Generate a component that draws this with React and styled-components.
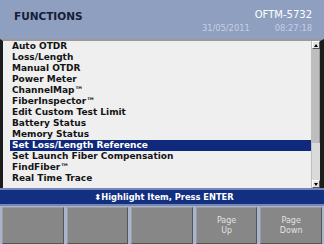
import React from "react";
import styled, { createGlobalStyle } from "styled-components";

const Global = createGlobalStyle`
  html, body { margin: 0; padding: 0; background: #000; }
  body { font-family: "DejaVu Sans", Verdana, sans-serif; }
`;

const Screen = styled.div`
  width: 324px;
  height: 244px;
  display: flex;
  flex-direction: column;
  background: #101010;
  overflow: hidden;
`;

const Header = styled.div`
  height: 39px;
  flex: none;
  background: #8e9fbf;
  display: flex;
  justify-content: space-between;
  padding: 0 12px 0 14px;
  box-sizing: border-box;
`;

const Title = styled.div`
  font-weight: bold;
  font-size: 10.5px;
  color: #14203a;
  padding-top: 10px;
`;

const Right = styled.div`
  display: flex;
  flex-direction: column;
  align-items: flex-end;
  padding-top: 9px;
`;

const Model = styled.div`
  color: #fff;
  font-size: 10px;
`;

const DateRow = styled.div`
  display: flex;
  gap: 25px;
  margin-top: 3px;
  font-size: 8.3px;
  color: #c7d0e3;
`;

const ListPanel = styled.div`
  flex: 1;
  display: flex;
  background: #efefef;
  border-top: 2px solid #9a9a9a;
  border-left: 3px solid #1c1c1c;
  border-right: 4px solid #1c1c1c;
  min-height: 0;
`;

const List = styled.div`
  flex: 1;
  display: flex;
  flex-direction: column;
  padding: 0 0 0 7px;
  overflow: hidden;
`;

const Item = styled.div`
  height: 11px;
  line-height: 11px;
  font-size: 9px;
  font-weight: bold;
  white-space: nowrap;
  padding-left: 2px;
  color: ${(p) => (p.$sel ? "#ffffff" : "#141414")};
  background: ${(p) => (p.$sel ? "#0f2a7c" : "transparent")};
`;

const Scroll = styled.div`
  width: 8px;
  display: flex;
  flex-direction: column;
  background: #dadada;
  border-left: 1px solid #bdbdbd;
`;

const Arrow = styled.div`
  height: 8px;
  background: #e4e4e4;
  border: 1px solid;
  border-color: #fff #555 #555 #fff;
  box-sizing: border-box;
  display: flex;
  align-items: center;
  justify-content: center;
  flex: none;
`;

const Thumb = styled.div`
  height: 94px;
  background: #bdbdbd;
  border-right: 1px solid #9a9a9a;
  flex: none;
`;

const Track = styled.div`
  flex: 1;
`;

const Status = styled.div`
  height: 18px;
  flex: none;
  background: #132f82;
  border-top: 2px solid #7487b8;
  border-bottom: 2px solid #7487b8;
  box-sizing: border-box;
  color: #fff;
  font-size: 8.3px;
  font-weight: bold;
  display: flex;
  align-items: center;
  justify-content: center;
  padding-left: 4px;
`;

const Buttons = styled.div`
  height: 37px;
  flex: none;
  display: grid;
  grid-template-columns: repeat(5, 1fr);
  gap: 3px;
  padding: 1px 2px 0 2px;
  background: #a9b5cc;
`;

const Btn = styled.div`
  background: #878787;
  border-top: 1px solid #9c9c9c;
  border-left: 1px solid #9c9c9c;
  border-right: 1px solid #555;
  border-bottom: 1px solid #555;
  color: #e2e2e2;
  font-size: 8px;
  line-height: 10px;
  text-align: center;
  display: flex;
  flex-direction: column;
  justify-content: center;
`;

const items = [
  "Auto OTDR",
  "Loss/Length",
  "Manual OTDR",
  "Power Meter",
  "ChannelMap™",
  "FiberInspector™",
  "Edit Custom Test Limit",
  "Battery Status",
  "Memory Status",
  "Set Loss/Length Reference",
  "Set Launch Fiber Compensation",
  "FindFiber™",
  "Real Time Trace",
];

const Tri = ({ up }) => (
  <svg width="4" height="3" viewBox="0 0 4 3">
    <path d={up ? "M0 3 L2 0 L4 3 Z" : "M0 0 L2 3 L4 0 Z"} fill="#000" />
  </svg>
);

export default function App() {
  return (
    <>
      <Global />
      <Screen>
        <Header>
          <Title>FUNCTIONS</Title>
          <Right>
            <Model>OFTM-5732</Model>
            <DateRow>
              <span>31/05/2011</span>
              <span>08:27:18</span>
            </DateRow>
          </Right>
        </Header>
        <ListPanel>
          <List>
            {items.map((t, i) => (
              <Item key={t} $sel={i === 9}>
                {t}
              </Item>
            ))}
          </List>
          <Scroll>
            <Arrow>
              <Tri up />
            </Arrow>
            <Thumb />
            <Track />
            <Arrow>
              <Tri />
            </Arrow>
          </Scroll>
        </ListPanel>
        <Status>⬍Highlight Item, Press ENTER</Status>
        <Buttons>
          <Btn />
          <Btn />
          <Btn />
          <Btn>
            <span>Page</span>
            <span>Up</span>
          </Btn>
          <Btn>
            <span>Page</span>
            <span>Down</span>
          </Btn>
        </Buttons>
      </Screen>
    </>
  );
}
